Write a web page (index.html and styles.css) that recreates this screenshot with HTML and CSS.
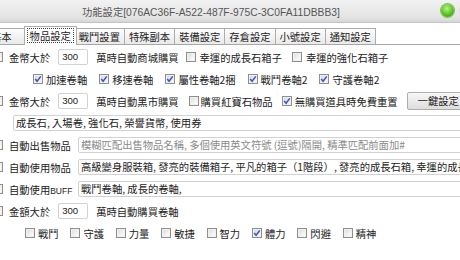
FILE: index.html
```html
<!DOCTYPE html>
<html>
<head>
<meta charset="utf-8">
<link rel="stylesheet" href="styles.css">
</head>
<body>
<div class="titlebar">
  <span class="title">功能設定[076AC36F-A522-487F-975C-3C0FA11DBBB3]</span>
  <span class="lamp green"></span>
  <span class="lamp red"></span>
</div>
<div class="tabs">
  <div class="tab first">基本</div>
  <div class="tab active"><span class="focus">物品設定</span></div>
  <div class="tab">戰鬥設置</div>
  <div class="tab">特殊副本</div>
  <div class="tab">裝備設定</div>
  <div class="tab">存倉設定</div>
  <div class="tab">小號設定</div>
  <div class="tab">通知設定</div>
</div>
<div class="panel">
  <div class="row">
    <span class="cb lead"></span><span class="lbl">金幣大於</span><span class="box num">300</span><span class="txt">萬時自動商城購買</span>
    <span class="opt wide m10"><span class="cb"></span>幸運的成長石箱子</span>
    <span class="opt wide"><span class="cb"></span>幸運的強化石箱子</span>
  </div>
  <div class="row indent">
    <span class="opt sp"><span class="cb on"><svg viewBox="0 0 8 8" width="8" height="8"><path d="M1.2 4 L3.1 6.3 L6.8 1.4" class="tick"/></svg></span>加速卷軸</span>
    <span class="opt sp"><span class="cb on"><svg viewBox="0 0 8 8" width="8" height="8"><path d="M1.2 4 L3.1 6.3 L6.8 1.4" class="tick"/></svg></span>移速卷軸</span>
    <span class="opt sp"><span class="cb on"><svg viewBox="0 0 8 8" width="8" height="8"><path d="M1.2 4 L3.1 6.3 L6.8 1.4" class="tick"/></svg></span>屬性卷軸2捆</span>
    <span class="opt sp"><span class="cb on"><svg viewBox="0 0 8 8" width="8" height="8"><path d="M1.2 4 L3.1 6.3 L6.8 1.4" class="tick"/></svg></span>戰鬥卷軸2</span>
    <span class="opt sp"><span class="cb on"><svg viewBox="0 0 8 8" width="8" height="8"><path d="M1.2 4 L3.1 6.3 L6.8 1.4" class="tick"/></svg></span>守護卷軸2</span>
  </div>
  <div class="row">
    <span class="cb lead"></span><span class="lbl">金幣大於</span><span class="box num">300</span><span class="txt wide-gap">萬時自動黑市購買</span>
    <span class="opt tight m9"><span class="cb"></span>購買紅寶石物品</span>
    <span class="opt"><span class="cb on"><svg viewBox="0 0 8 8" width="8" height="8"><path d="M1.2 4 L3.1 6.3 L6.8 1.4" class="tick"/></svg></span>無購買道具時免費重置</span>
    <span class="btn">一鍵設定</span>
  </div>
  <div class="row">
    <span class="box full">成長石, 入場卷, 強化石, 榮譽貨幣, 使用券</span>
  </div>
  <div class="row">
    <span class="cb lead"></span><span class="lbl6">自動出售物品</span><span class="box long ph">模糊匹配出售物品名稱, 多個使用英文符號 (逗號)隔開, 精準匹配前面加#</span>
  </div>
  <div class="row">
    <span class="cb lead"></span><span class="lbl6">自動使用物品</span><span class="box long">高級變身服裝箱, 發亮的裝備箱子, 平凡的箱子（1階段）, 發亮的成長石箱, 幸運的成長石箱子</span>
  </div>
  <div class="row">
    <span class="cb lead"></span><span class="lbl6">自動使用<span class="latin">BUFF</span></span><span class="box long">戰鬥卷軸, 成長的卷軸,</span>
  </div>
  <div class="row">
    <span class="cb lead"></span><span class="lbl">金額大於</span><span class="box num">300</span><span class="txt">萬時自動購買卷軸</span>
  </div>
  <div class="row stats">
    <span class="opt st"><span class="cb"></span>戰鬥</span>
    <span class="opt st"><span class="cb"></span>守護</span>
    <span class="opt st"><span class="cb"></span>力量</span>
    <span class="opt st"><span class="cb"></span>敏捷</span>
    <span class="opt st"><span class="cb"></span>智力</span>
    <span class="opt st"><span class="cb on"><svg viewBox="0 0 8 8" width="8" height="8"><path d="M1.2 4 L3.1 6.3 L6.8 1.4" class="tick"/></svg></span>體力</span>
    <span class="opt st"><span class="cb"></span>閃避</span>
    <span class="opt st"><span class="cb"></span>精神</span>
  </div>
</div>
</body>
</html>
```
FILE: styles.css
```css
html, body {
  margin: 0;
  padding: 0;
}
body {
  width: 460px;
  height: 260px;
  overflow: hidden;
  background: #ffffff;
  font-family: "Noto Sans CJK TC", "Liberation Sans", sans-serif;
  font-size: 10.3px;
  color: #222222;
}
.titlebar {
  height: 22px;
  display: flex;
  align-items: center;
  background: linear-gradient(#f2f2f2, #e3e3e3 80%, #d6d6d6);
  border-bottom: 1px solid #c4c4c4;
}
.title {
  padding-left: 82px;
  font-family: "Liberation Sans", "Noto Sans CJK TC", sans-serif;
  font-size: 10.3px;
  color: #555555;
  white-space: nowrap;
}
.lamp {
  width: 13px;
  height: 13px;
  border-radius: 50%;
  flex: none;
}
.lamp.green {
  margin-left: auto;
  margin-top: -2px;
  background: radial-gradient(circle at 45% 35%, #b8f28a, #55c21e 55%, #2f8a10);
  box-shadow: 0 0 0 1px #7fbf5a;
}
.lamp.red {
  margin-left: 5px;
  margin-right: -12px;
  margin-top: -2px;
  background: #eadada;
}
.tabs {
  display: flex;
  align-items: flex-end;
  height: 21px;
  margin-left: -14px;
  border-bottom: 1px solid #a7a7a7;
  white-space: nowrap;
}
.tab {
  height: 15px;
  line-height: 15px;
  padding: 0 4px;
  border: 1px solid #acacac;
  border-bottom: none;
  background: linear-gradient(#fdfdfd, #e9e9e9);
  margin-right: -1px;
  flex: none;
}
.tab.first {
  padding-right: 14px;
}
.tab.active {
  position: relative;
  z-index: 1;
  height: 18px;
  line-height: 17px;
  margin: 0 -3px -1px -2px;
  padding: 0 3px;
  background: #ffffff;
}
.focus {
  display: inline-block;
  line-height: 13px;
  padding: 0 2px;
  outline: 1px dotted #444;
  outline-offset: 0;
}
.panel {
  width: 500px;
  padding-top: 4px;
}
.row {
  display: flex;
  align-items: center;
  height: 16px;
  margin-bottom: 6px;
  white-space: nowrap;
}
.row.indent {
  padding-left: 33px;
}
.row.stats {
  padding-left: 25px;
}
.cb {
  width: 10px;
  height: 10px;
  box-sizing: border-box;
  border: 1px solid #8e8f8f;
  background: linear-gradient(135deg, #d9d9d9, #f7f7f7 70%, #ffffff);
  box-shadow: inset 0 0 0 1px #f0f0f0;
  display: inline-flex;
  align-items: center;
  justify-content: center;
  flex: none;
}
.cb.on {
  background: linear-gradient(135deg, #cdd6ee, #eef1fa 70%, #ffffff);
}
.cb svg {
  display: block;
}
.tick {
  fill: none;
  stroke: #3e55b2;
  stroke-width: 1.5;
}
.cb.lead {
  margin-left: -7px;
  margin-right: 6px;
}
.lbl {
  margin-right: 8px;
}
.lbl6 {
  width: 69px;
  flex: none;
}
.latin {
  font-family: "Liberation Sans", sans-serif;
  font-size: 8.5px;
}
.txt {
  margin-right: 7px;
}
.txt.wide-gap {
  margin-right: 10px;
}
.opt {
  display: inline-flex;
  align-items: center;
  gap: 3px;
}
.opt.wide {
  gap: 4px;
}
.opt.tight {
  gap: 2px;
}
.m10 {
  margin-right: 10px;
}
.m9 {
  margin-right: 9px;
}
.opt.sp {
  margin-right: 12px;
}
.opt.st {
  width: 35px;
  margin-right: 10.4px;
}
.box {
  box-sizing: border-box;
  height: 16px;
  line-height: 14px;
  border: 1px solid #d2d2d2;
  border-radius: 2px;
  background: #ffffff;
  padding: 0 2px;
  overflow: hidden;
  white-space: nowrap;
}
.box.num {
  width: 30px;
  margin-right: 8px;
  padding: 0 3px;
  font-family: "Liberation Sans", sans-serif;
  font-size: 9.6px;
  flex: none;
}
.box.full {
  margin-left: 13px;
  width: 480px;
  flex: none;
}
.box.long {
  width: 420px;
  flex: none;
}
.box.ph {
  color: #8a8a8a;
}
.btn {
  box-sizing: border-box;
  height: 18px;
  line-height: 16px;
  margin-left: 9px;
  padding: 0 10px;
  border: 1px solid #adadad;
  border-radius: 2px;
  background: linear-gradient(#f7f7f7, #dddddd);
  flex: none;
}
```
